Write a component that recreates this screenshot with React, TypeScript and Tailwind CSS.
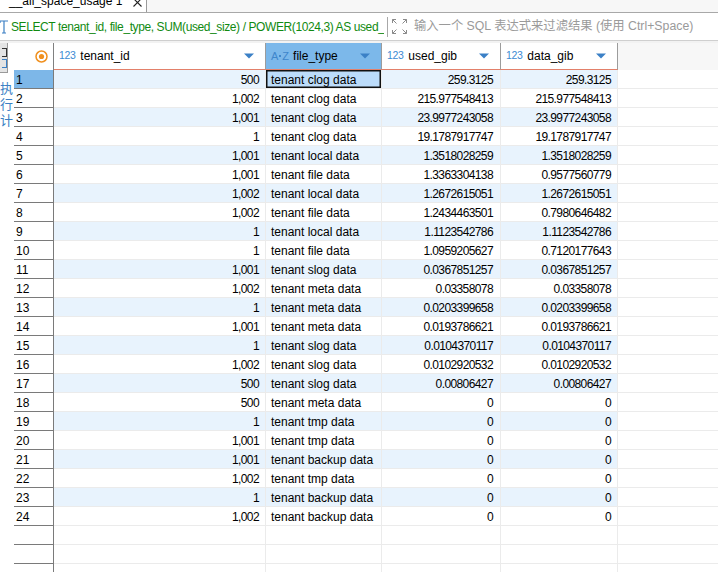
import React from "react";

type Row = [string, string, string, string];

const rows: Row[] = [
  ["500", "tenant clog data", "259.3125", "259.3125"],
  ["1,002", "tenant clog data", "215.977548413", "215.977548413"],
  ["1,001", "tenant clog data", "23.9977243058", "23.9977243058"],
  ["1", "tenant clog data", "19.1787917747", "19.1787917747"],
  ["1,001", "tenant local data", "1.3518028259", "1.3518028259"],
  ["1,001", "tenant file data", "1.3363304138", "0.9577560779"],
  ["1,002", "tenant local data", "1.2672615051", "1.2672615051"],
  ["1,002", "tenant file data", "1.2434463501", "0.7980646482"],
  ["1", "tenant local data", "1.1123542786", "1.1123542786"],
  ["1", "tenant file data", "1.0959205627", "0.7120177643"],
  ["1,001", "tenant slog data", "0.0367851257", "0.0367851257"],
  ["1,002", "tenant meta data", "0.03358078", "0.03358078"],
  ["1", "tenant meta data", "0.0203399658", "0.0203399658"],
  ["1,001", "tenant meta data", "0.0193786621", "0.0193786621"],
  ["1", "tenant slog data", "0.0104370117", "0.0104370117"],
  ["1,002", "tenant slog data", "0.0102920532", "0.0102920532"],
  ["500", "tenant slog data", "0.00806427", "0.00806427"],
  ["500", "tenant meta data", "0", "0"],
  ["1", "tenant tmp data", "0", "0"],
  ["1,001", "tenant tmp data", "0", "0"],
  ["1,001", "tenant backup data", "0", "0"],
  ["1,002", "tenant tmp data", "0", "0"],
  ["1", "tenant backup data", "0", "0"],
  ["1,002", "tenant backup data", "0", "0"],
];

function Caret() {
  return (
    <svg width="10" height="6" viewBox="0 0 10 6" className="shrink-0">
      <path d="M0 0.5h10L5 5.5z" fill="#3b80c6" />
    </svg>
  );
}

function NumIcon() {
  return <span className="mr-[5px] text-[10.5px] tracking-[-0.4px] text-[#3d8bd3]">123</span>;
}

function AzIcon() {
  return (
    <span className="mr-[4px] flex items-center text-[11px] text-[#3f86cc]">
      A<span className="mx-[1px] h-[2px] w-[2px] bg-[#3f86cc]" />Z
    </span>
  );
}

function Head({
  width,
  label,
  az,
  active,
}: {
  width: string;
  label: string;
  az?: boolean;
  active?: boolean;
}) {
  return (
    <div
      className={`${width} flex h-full items-center border-r border-b border-r-[#9c9c9c] border-b-[#e3806a] pl-[5px] pr-[11px] ${
        active ? "bg-[#7cb8ea]" : "bg-white"
      }`}
    >
      {az ? <AzIcon /> : <NumIcon />}
      <span className="flex-1 text-black">{label}</span>
      <Caret />
    </div>
  );
}

function LeftTools() {
  return (
    <div className="flex w-[14px] shrink-0 flex-col">
      <div className="flex h-[30px] w-[8px] flex-col items-end justify-center gap-[2px] overflow-hidden border-r border-b border-[#9a9a9a] bg-[#e4e4e4]">
        <span className="block h-[9px] w-[5px] border border-l-0 border-[#333]" />
        <span className="block h-[9px] w-[5px] border border-l-0 border-[#3b7fc4]" />
      </div>
      <div className="mt-[8px] flex flex-col items-end overflow-hidden pr-[7px] text-[13px] leading-[16px] text-[#3b7fc4]">
        <span className="-mr-[6px]">执</span>
        <span className="-mr-[6px]">行</span>
        <span className="-mr-[6px]">计</span>
      </div>
    </div>
  );
}

export default function App() {
  const empty = [0, 1, 2];
  return (
    <div className="relative h-[572px] w-[718px] overflow-hidden bg-white font-['Liberation_Sans','Noto_Sans_CJK_SC',sans-serif] text-[12px] text-black">
      {/* tab strip */}
      <div className="flex h-[13px] border-b border-[#a8a8a8] bg-[#f7f7f7]">
        <div className="relative flex w-[147px] items-start overflow-hidden border-r border-[#9a9a9a] bg-white pl-[9px]">
          <span className="-mt-[6px] leading-[14px]">__all_space_usage 1</span>
          <svg width="9" height="9" viewBox="0 0 9 9" className="absolute left-[133px] -top-[2px]">
            <path d="M0.5 0.5l8 8M8.5 0.5l-8 8" stroke="#222" strokeWidth="1.1" />
          </svg>
        </div>
      </div>

      {/* filter bar */}
      <div className="flex h-[28px] items-center border-b border-[#cfcfcf] bg-white">
        <svg width="9" height="14" viewBox="0 0 9 14" className="shrink-0">
          <path d="M0 1h8M4 1v12M2 13h4M0 1v2" stroke="#3b7fc4" strokeWidth="1.2" fill="none" />
        </svg>
        <div className="ml-[2px] w-[373px] shrink-0 overflow-hidden whitespace-nowrap tracking-[-0.4px] text-[#118a11]">
          SELECT tenant_id, file_type, SUM(used_size) / POWER(1024,3) AS used_g
        </div>
        <div className="ml-[3px] h-[20px] w-px bg-[#a8a8a8]" />
        <svg width="15" height="15" viewBox="0 0 15 15" className="ml-[4px] shrink-0">
          <g stroke="#8a8a8a" strokeWidth="1" fill="none">
            <path d="M0.5 4V0.5H4M0.5 0.5l4 4" />
            <path d="M11 0.5h3.5V4M14.5 0.5l-4 4" />
            <path d="M0.5 11v3.5H4M0.5 14.5l4-4" />
            <path d="M11 14.5h3.5V11M14.5 14.5l-4-4" />
          </g>
        </svg>
        <span className="ml-[7px] whitespace-nowrap text-[12.3px] text-[#9a9a9a]">
          输入一个 SQL 表达式来过滤结果 (使用 Ctrl+Space)
        </span>
      </div>
      <div className="h-[2px] bg-[#f2f2f2]" />

      {/* grid */}
      <div className="flex">
        <LeftTools />
        <div className="flex flex-1 flex-col">
          <div className="flex h-[27px]">
            <div className="flex w-[40px] shrink-0 items-center justify-end border-r border-[#808080] bg-white pr-[5px]">
              <svg width="13" height="13" viewBox="0 0 13 13">
                <circle cx="6.5" cy="6.5" r="5.5" stroke="#f0901e" strokeWidth="1.5" fill="none" />
                <circle cx="6.5" cy="6.5" r="2.6" fill="#f0901e" />
              </svg>
            </div>
            <Head width="w-[212px]" label="tenant_id" />
            <Head width="w-[116px]" label="file_type" az active />
            <Head width="w-[119px]" label="used_gib" />
            <Head width="w-[117px]" label="data_gib" />
            <div className="flex-1 bg-[#f7f7f7]" />
          </div>

          {rows.map((r, i) => {
            const odd = i % 2 === 0;
            const bg = odd ? "bg-[#e8f3fd]" : "bg-white";
            return (
              <div key={i} className="flex h-[19px] leading-[20px]">
                <div
                  className={`w-[40px] shrink-0 border-r border-b border-[#7a7a7a] pl-[2px] ${
                    i === 0 ? "bg-[#7db7e8]" : "bg-white"
                  }`}
                >
                  {i + 1}
                </div>
                <div className={`w-[212px] border-r border-b border-[#ebebeb] pr-[6px] text-right tracking-[-0.6px] ${bg}`}>
                  {r[0]}
                </div>
                <div
                  className={`w-[116px] overflow-hidden whitespace-nowrap border-r border-b border-[#ebebeb] pl-[5px] ${
                    i === 0 ? "bg-[#bcdcfa] shadow-[inset_0_0_0_1.5px_#111]" : bg
                  }`}
                >
                  {r[1]}
                </div>
                <div className={`w-[119px] border-r border-b border-[#ebebeb] pr-[7px] text-right tracking-[-0.6px] ${bg}`}>
                  {r[2]}
                </div>
                <div className={`w-[117px] border-r border-b border-[#ebebeb] pr-[6px] text-right tracking-[-0.6px] ${bg}`}>
                  {r[3]}
                </div>
                <div className="flex-1 border-b border-[#ebebeb]" />
              </div>
            );
          })}

          {empty.map((e) => (
            <div key={`e${e}`} className="flex h-[19px]">
              <div className="w-[40px] shrink-0 border-r border-b border-[#7a7a7a]" />
              <div className="w-[212px] border-r border-b border-[#ebebeb]" />
              <div className="w-[116px] border-r border-b border-[#ebebeb]" />
              <div className="w-[119px] border-r border-b border-[#ebebeb]" />
              <div className="w-[117px] border-r border-b border-[#ebebeb]" />
              <div className="flex-1 border-b border-[#ebebeb]" />
            </div>
          ))}
        </div>
      </div>
    </div>
  );
}
